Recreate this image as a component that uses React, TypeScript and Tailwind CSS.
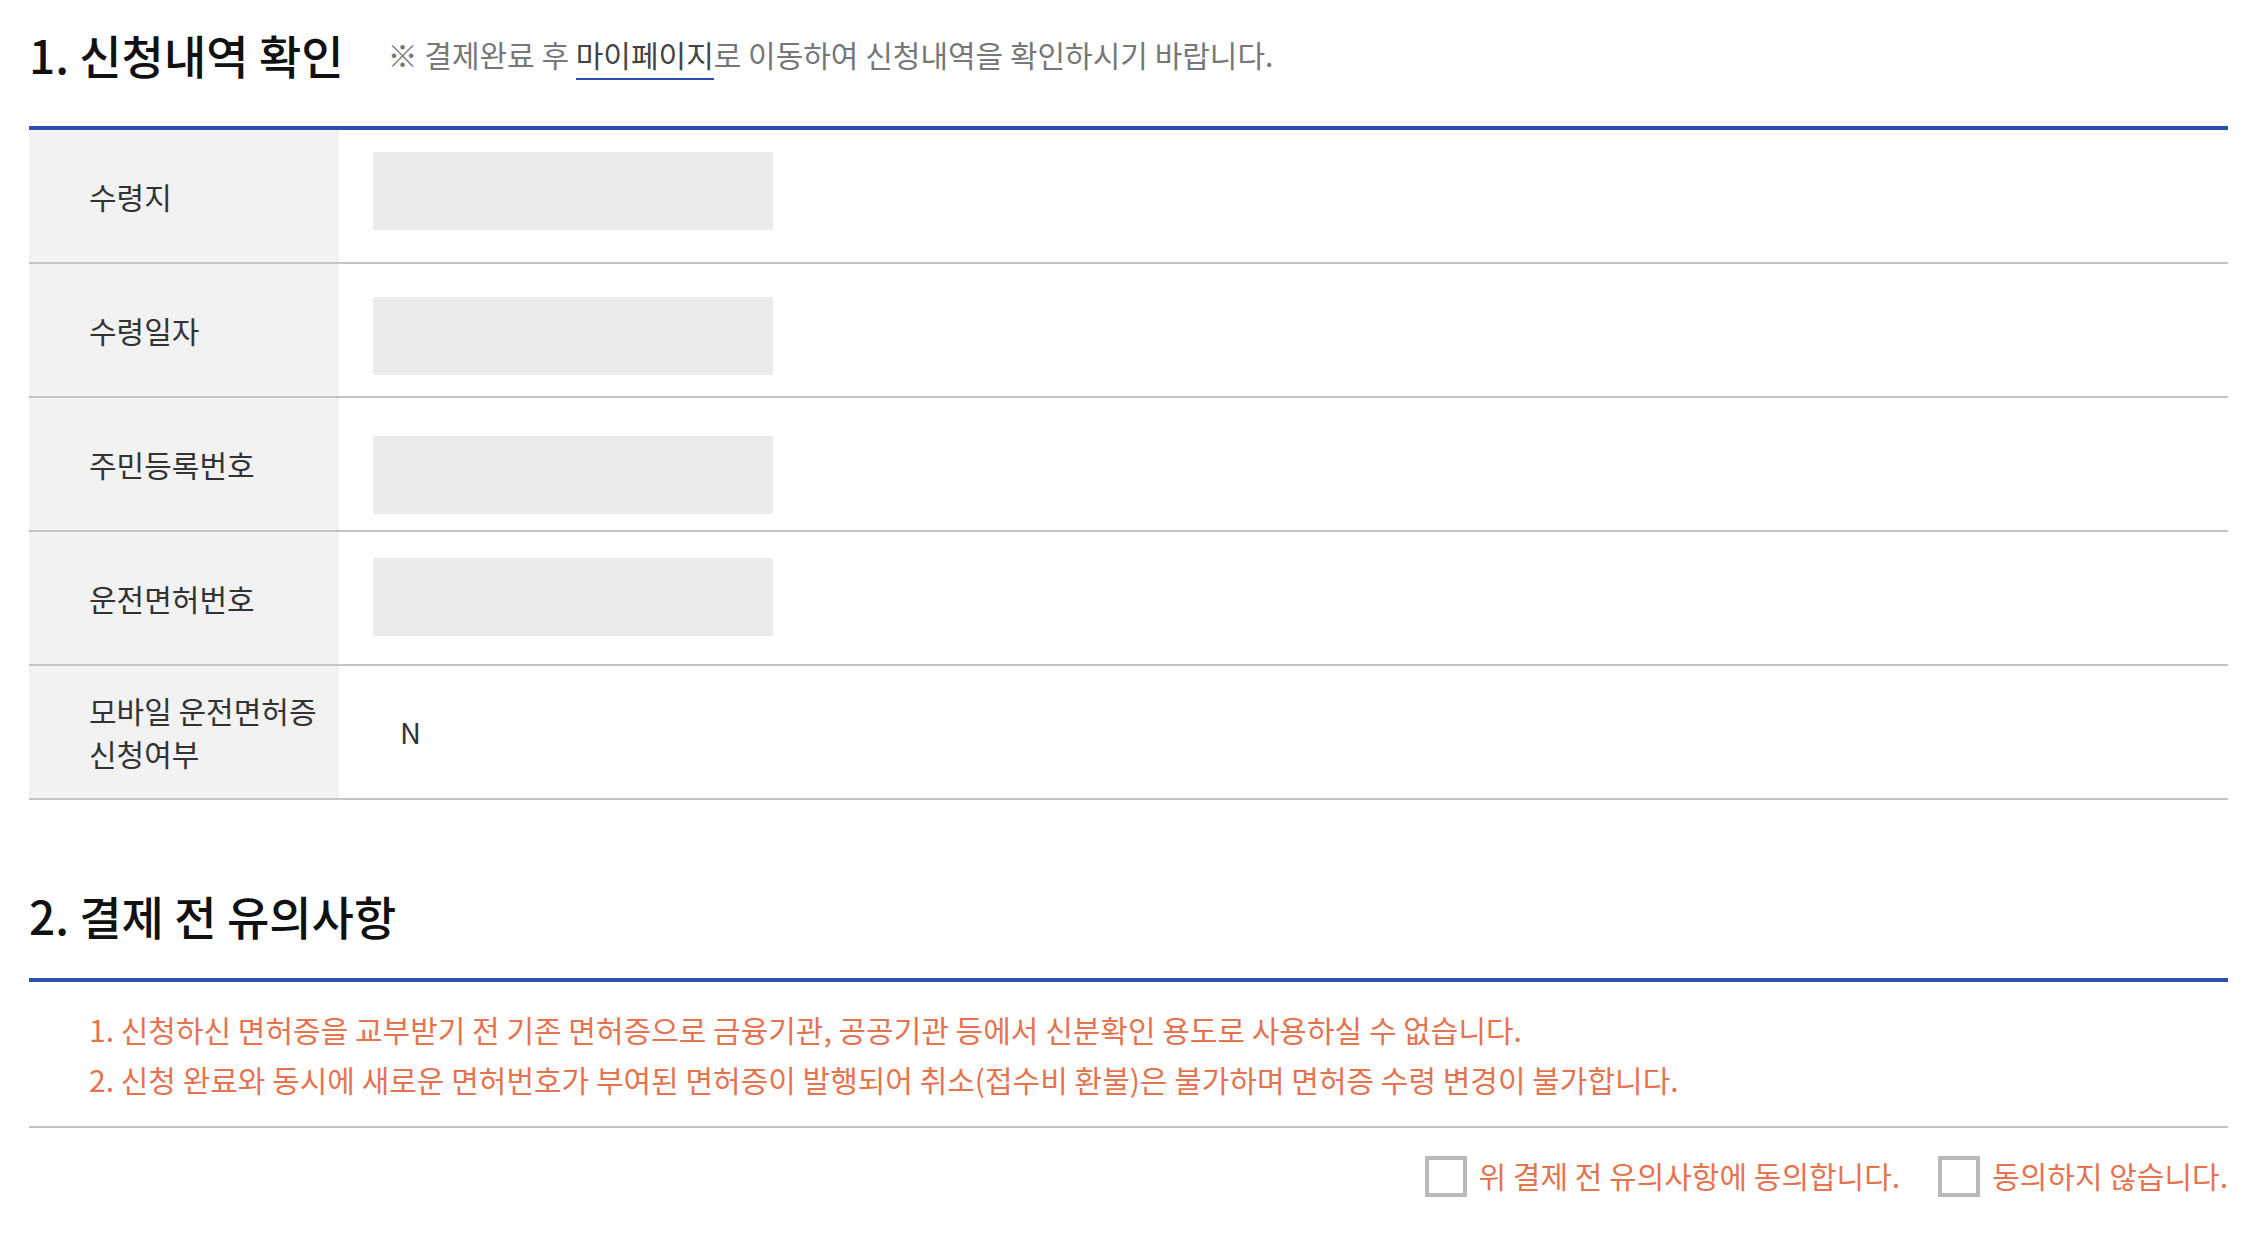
const font = { fontFamily: '"Noto Sans CJK KR", "Noto Sans", sans-serif' };

type Row = {
  label: string[];
  maskTop?: string;
  value?: string;
};

const rows: Row[] = [
  { label: ["수령지"], maskTop: "mt-[22px]" },
  { label: ["수령일자"], maskTop: "mt-[33px]" },
  { label: ["주민등록번호"], maskTop: "mt-[38px]" },
  { label: ["운전면허번호"], maskTop: "mt-[26px]" },
  { label: ["모바일 운전면허증", "신청여부"], value: "N" },
];

function InfoRow({ row }: { row: Row }) {
  return (
    <div className="flex h-[134px] border-b-2 border-[#c4c4c4]">
      <div className="flex w-[310px] shrink-0 items-center bg-[#f2f2f2] pl-[60px] text-[30px] leading-[43px] text-[#333]">
        <div>
          {row.label.map((line) => (
            <div key={line}>{line}</div>
          ))}
        </div>
      </div>
      {row.value ? (
        <div className="flex items-center pl-[61px] text-[29px] text-[#333]">{row.value}</div>
      ) : (
        <div className="pl-[34px]">
          <div className={`${row.maskTop} h-[78px] w-[400px] bg-[#ebebeb]`} />
        </div>
      )}
    </div>
  );
}

function CheckOption({ label }: { label: string }) {
  return (
    <label className="flex items-center gap-[12px]">
      <span className="h-[41px] w-[42px] border-4 border-[#b9b9b9] bg-white" />
      <span className="pb-[3px]">{label}</span>
    </label>
  );
}

export default function App() {
  return (
    <div className="min-h-screen bg-white pl-[29px] pr-[26px]" style={font}>
      <div className="flex h-[126px] items-center pb-[18px]">
        <h2 className="text-[46px] font-medium leading-none text-[#111]">1. 신청내역 확인</h2>
        <p className="ml-[44px] text-[30px] leading-none text-[#777]">
          ※ 결제완료 후{" "}
          <span className="relative text-[#444]">
            마이페이지
            <span className="absolute left-0 right-0 top-[46px] h-[2px] bg-[#2b4fad]" />
          </span>
          로 이동하여 신청내역을 확인하시기 바랍니다.
        </p>
      </div>

      <div className="border-t-4 border-[#2b4fad]">
        {rows.map((row) => (
          <InfoRow key={row.label.join(" ")} row={row} />
        ))}
      </div>

      <div className="flex h-[178px] items-center pt-[52px]">
        <h2 className="text-[46px] font-medium leading-none text-[#111]">2. 결제 전 유의사항</h2>
      </div>

      <div className="border-t-4 border-[#2b4fad] border-b-2 border-b-[#c4c4c4] py-[22px] pl-[60px] text-[30px] leading-[50px] text-[#e5734f]">
        <p>1. 신청하신 면허증을 교부받기 전 기존 면허증으로 금융기관, 공공기관 등에서 신분확인 용도로 사용하실 수 없습니다.</p>
        <p>2. 신청 완료와 동시에 새로운 면허번호가 부여된 면허증이 발행되어 취소(접수비 환불)은 불가하며 면허증 수령 변경이 불가합니다.</p>
      </div>

      <div className="mt-[28px] flex justify-end gap-[38px] text-[30px] leading-none text-[#e5734f]">
        <CheckOption label="위 결제 전 유의사항에 동의합니다." />
        <CheckOption label="동의하지 않습니다." />
      </div>
    </div>
  );
}
